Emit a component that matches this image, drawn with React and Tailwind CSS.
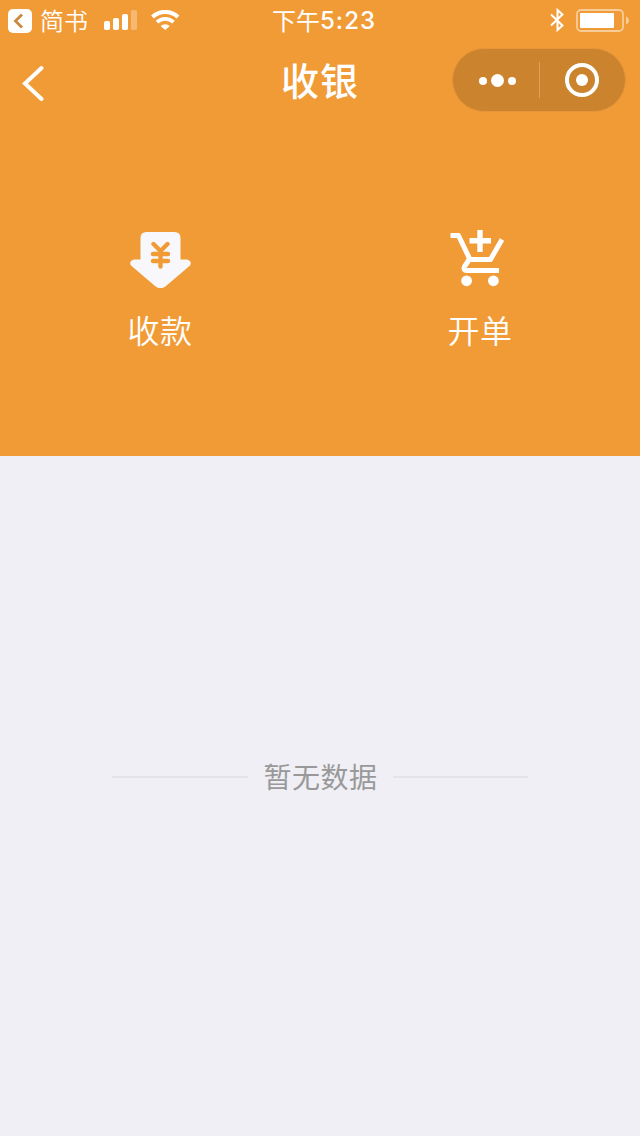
import React from "react";

const StatusBar = () => (
  <div className="grid h-10 grid-cols-3 items-center text-2xl leading-[38px]">
    <div className="flex items-center pl-2">
      <svg className="mt-0.5 h-6 w-6" viewBox="0 0 24 24" fill="none">
        <rect width="24" height="24" rx="5" fill="#fff" />
        <path d="M14 5.5 7.5 12l6.5 6.5" stroke="#c98a3c" strokeWidth="2.8" />
      </svg>
      <span className="-mt-px ml-2 font-[350]">简书</span>
      <svg className="ml-4 h-5 w-[33px]" viewBox="0 0 33 20" fill="#fff">
        <rect y="11" width="6" height="9" rx="1.8" />
        <rect x="9" y="8" width="6" height="12" rx="1.8" />
        <rect x="18" y="4" width="6" height="16" rx="1.8" />
        <rect x="27" width="6" height="20" rx="1.8" opacity="0.3" />
      </svg>
      <svg className="ml-3.5 h-5 w-[29px]" viewBox="0 0 29 20" fill="none" stroke="#fff">
        <path d="M1.5 7a18.5 18.5 0 0 1 25.5 0" strokeWidth="4" />
        <path d="M6 12.2a12 12 0 0 1 16.5 0" strokeWidth="3.8" />
        <path d="M14.2 20 9.6 16a7 7 0 0 1 9.2 0Z" fill="#fff" stroke="none" />
      </svg>
    </div>
    <div className="flex items-center justify-center whitespace-nowrap pl-2">
      <span>下午</span>
      <span className="mt-0.5 font-['Inter'] font-medium tracking-[1px]">5:23</span>
    </div>
    <div className="flex items-center justify-end pr-[11px]">
      <svg className="h-6 w-4" viewBox="0 0 16 24" fill="none" stroke="#fff" strokeWidth="2">
        <path d="m2 6.5 11.5 11L8.5 22V2l5 4.5L2 17.5" />
      </svg>
      <svg className="ml-[11px] h-6 w-[53px]" viewBox="0 0 53 24">
        <rect x="1" y="2" width="46" height="21" rx="4" fill="none" stroke="#f8cc98" strokeWidth="1.8" />
        <rect x="4" y="5" width="34" height="15" rx="1" fill="#fff" />
        <path d="M50 8.5c4 1.5 4 6.5 0 8Z" fill="#f8cc98" />
      </svg>
    </div>
  </div>
);

const NavBar = () => (
  <div className="grid h-20 grid-cols-3 items-center">
    <svg className="ml-[22px] mt-1.5 h-9 w-6" viewBox="0 0 24 36" fill="none">
      <path
        d="M19.5 3 3 18.5 19.5 34"
        stroke="#fff"
        strokeWidth="4"
        strokeLinecap="round"
      />
    </svg>
    <h1 className="-mt-0.5 text-center text-[38px] font-medium leading-[78px] tracking-[1px]">收银</h1>
    <div className="mr-3.5 flex h-16 w-[174px] items-center justify-self-end rounded-full border border-[#e5963a] bg-[#cb832e]">
      <div className="flex w-[86px] items-center justify-center gap-1 pl-[3px]">
        <span className="mt-0.5 h-2 w-2 rounded-full bg-white" />
        <span className="h-[13px] w-[13px] rounded-full bg-white" />
        <span className="mt-0.5 h-2 w-2 rounded-full bg-white" />
      </div>
      <div className="h-9 w-px bg-[#dfa15a]" />
      <div className="flex w-[84px] justify-center">
        <div className="flex h-[34px] w-[34px] items-center justify-center rounded-full border-4 border-white">
          <span className="h-3 w-3 rounded-full bg-white" />
        </div>
      </div>
    </div>
  </div>
);

const ReceiveIcon = () => (
  <svg className="h-[60px] w-16" viewBox="-2 0 64 60" fill="none">
    <path
      d="M16.5 4h28q6 0 6 6v21.5h6.500q5.500 2 3 6L36 58q-5.500 4.500-11 0L1 37.500q-2.500-4 3-6h6.500V10q0-6 6-6Z"
      fill="#f8f7fc"
    />
    <path
      d="m23.5 16 7 7 7-7M23 26h15M23 33h15M30.5 23v15.5"
      stroke="#f19b37"
      strokeWidth="4.4"
      strokeLinecap="round"
    />
  </svg>
);

const CartIcon = () => (
  <svg className="h-[60px] w-16" viewBox="-2 0 64 60" fill="none" stroke="#fff" strokeWidth="5">
    <path d="M.5 7.5h8L20 31.5h20.5L52 11.5" strokeLinejoin="round" />
    <path d="m19.5 31-5 7.5q-2 4 2.5 4H49" />
    <path d="M30 2v22M19.5 12.7H41" strokeWidth="5.4" />
    <circle cx="16.6" cy="52.8" r="5.4" fill="#fff" stroke="none" />
    <circle cx="43.4" cy="52.8" r="5.4" fill="#fff" stroke="none" />
  </svg>
);

const App = () => {
  const actions = [
    { icon: ReceiveIcon, label: "收款" },
    { icon: CartIcon, label: "开单" },
  ];

  return (
    <div className="flex h-[1136px] w-[640px] flex-col bg-[#efeff5] font-['Noto_Sans_CJK_SC',sans-serif]">
      <header className="h-[456px] bg-[#f19b37] text-white">
        <StatusBar />
        <NavBar />

        {/* Main actions */}
        <div className="grid grid-cols-2 pt-[108px]">
          {actions.map((action) => (
            <div key={action.label} className="flex flex-col items-center">
              <action.icon />
              <span className="mt-[17px] text-[32px] font-[350] leading-[48px] tracking-[0.5px]">
                {action.label}
              </span>
            </div>
          ))}
        </div>
      </header>

      {/* Empty state */}
      <main className="flex flex-1 items-start justify-center pt-[301px]">
        <div className="flex w-[416px] items-center justify-between">
          <span className="h-0.5 w-[136px] bg-[#e4e4e8]" />
          <span className="-mt-px text-[28px] leading-[41px] tracking-[0.5px] text-[#999]">暂无数据</span>
          <span className="h-0.5 w-[135px] bg-[#e4e4e8]" />
        </div>
      </main>
    </div>
  );
};

export default App;
